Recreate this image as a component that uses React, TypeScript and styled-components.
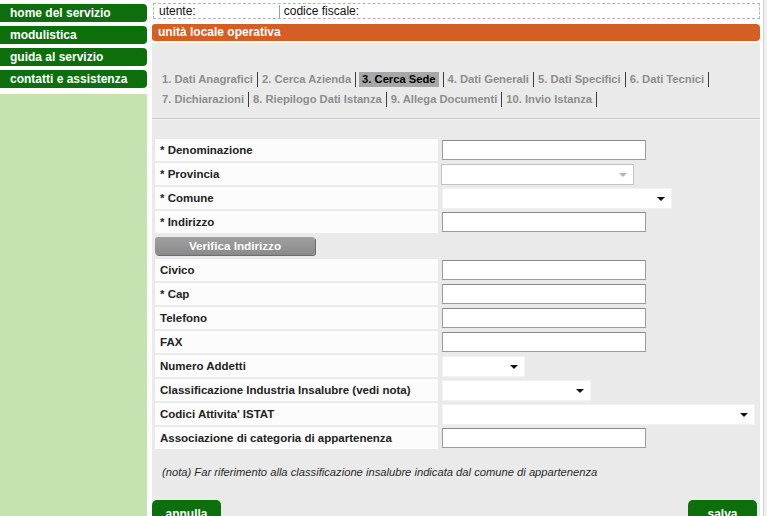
import { Fragment } from "react"
import styled, { createGlobalStyle } from "styled-components"

const GlobalStyle = createGlobalStyle`
  html, body {
    margin: 0;
    padding: 0;
    background: #fff;
    font-family: "Liberation Sans", Arial, sans-serif;
  }
`

type Field = {
  label: string
  kind: "text" | "select" | "disabled" | "button"
  width?: number
}

const menu = ["home del servizio", "modulistica", "guida al servizio", "contatti e assistenza"]

const stepLines = [
  ["1. Dati Anagrafici", "2. Cerca Azienda", "3. Cerca Sede", "4. Dati Generali", "5. Dati Specifici", "6. Dati Tecnici"],
  ["7. Dichiarazioni", "8. Riepilogo Dati Istanza", "9. Allega Documenti", "10. Invio Istanza"],
]

const fields: Field[] = [
  { label: "* Denominazione", kind: "text", width: 204 },
  { label: "* Provincia", kind: "disabled", width: 193 },
  { label: "* Comune", kind: "select", width: 230 },
  { label: "* Indirizzo", kind: "text", width: 204 },
  { label: "Verifica Indirizzo", kind: "button" },
  { label: "Civico", kind: "text", width: 204 },
  { label: "* Cap", kind: "text", width: 204 },
  { label: "Telefono", kind: "text", width: 204 },
  { label: "FAX", kind: "text", width: 204 },
  { label: "Numero Addetti", kind: "select", width: 83 },
  { label: "Classificazione Industria Insalubre (vedi nota)", kind: "select", width: 149 },
  { label: "Codici Attivita' ISTAT", kind: "select", width: 313 },
  { label: "Associazione di categoria di appartenenza", kind: "text", width: 204 },
]

export default function App() {
  return (
    <>
      <GlobalStyle />
      <Page>
        <Sidebar>
          {menu.map((m) => (
            <MenuItem key={m}>{m}</MenuItem>
          ))}
          <SideFill />
        </Sidebar>

        <Main>
          <UserBar>
            <span>utente:</span>
            <UserSep />
            <span>codice fiscale:</span>
          </UserBar>
          <TitleBar>unità locale operativa</TitleBar>

          <Panel>
            <Steps>
              {stepLines.map((line, i) => (
                <StepLine key={i}>
                  {line.map((s) => (
                    <Fragment key={s}>
                      <Step $active={s === "3. Cerca Sede"}>{s}</Step>
                      <StepSep />
                    </Fragment>
                  ))}
                </StepLine>
              ))}
            </Steps>
            <Divider />

            <Form>
              {fields.map((f) =>
                f.kind === "button" ? (
                  <Row key={f.label}>
                    <GrayButton>{f.label}</GrayButton>
                  </Row>
                ) : (
                  <Row key={f.label}>
                    <LabelCell>{f.label}</LabelCell>
                    {f.kind === "text" && <TextInput $width={f.width!} />}
                    {f.kind === "select" && <SelectBox $width={f.width!} />}
                    {f.kind === "disabled" && <SelectBox $width={f.width!} $disabled />}
                  </Row>
                )
              )}
            </Form>

            <Note>(nota) Far riferimento alla classificazione insalubre indicata dal comune di appartenenza</Note>

            <Actions>
              <GreenButton>annulla</GreenButton>
              <GreenButton>salva</GreenButton>
            </Actions>
          </Panel>
        </Main>
        <ScrollEdge />
      </Page>
    </>
  )
}

const Page = styled.div`
  display: flex;
  height: 516px;
  overflow: hidden;
`

const Sidebar = styled.nav`
  width: 147px;
  flex-shrink: 0;
  display: flex;
  flex-direction: column;
  gap: 4px;
  padding-top: 4px;
`

const MenuItem = styled.div`
  height: 18px;
  line-height: 18px;
  padding-left: 10px;
  background: #0c6f0c;
  border-radius: 0 4px 4px 0;
  color: #fff;
  font-size: 12px;
  font-weight: bold;
`

const SideFill = styled.div`
  flex: 1;
  margin-top: 2px;
  background: #c4e3b1;
`

const Main = styled.main`
  width: 608px;
  margin-left: 5px;
  flex-shrink: 0;
  display: flex;
  flex-direction: column;
`

const UserBar = styled.div`
  margin: 3px 0 0 1px;
  height: 14px;
  border: 1px dashed #b4b4b4;
  background: #fff;
  display: flex;
  align-items: center;
  padding-left: 5px;
  font-size: 12px;
  color: #111;
`

const UserSep = styled.span`
  width: 1px;
  height: 13px;
  background: #7fa6c8;
  margin: 0 4px 0 83px;
`

const TitleBar = styled.div`
  margin-top: 5px;
  height: 17px;
  line-height: 17px;
  padding-left: 6px;
  background: #d35f25;
  border-radius: 3px 4px 4px 3px;
  color: #fff;
  font-size: 12px;
  font-weight: bold;
`

const Panel = styled.section`
  flex: 1;
  margin-top: 2px;
  background: #e9eae9;
  display: flex;
  flex-direction: column;
`

const Steps = styled.div`
  padding: 26px 10px 9px;
`

const StepLine = styled.div`
  display: flex;
  align-items: center;
  height: 20px;
`

const Step = styled.span<{ $active?: boolean }>`
  font-size: 11.2px;
  font-weight: bold;
  line-height: 15px;
  color: ${(p) => (p.$active ? "#000" : "#8d8d8d")};
  background: ${(p) => (p.$active ? "#a7a7a7" : "transparent")};
  padding: ${(p) => (p.$active ? "0 3px" : "0")};
  margin-left: ${(p) => (p.$active ? "-1px" : "0")};
`

const StepSep = styled.span`
  width: 1px;
  height: 15px;
  background: #3c3c3c;
  margin: 0 4px;
`

const Divider = styled.div`
  height: 1px;
  background: #c6c6c6;
  border-bottom: 1px solid #f4f4f4;
`

const Form = styled.div`
  margin-top: 19px;
  padding-left: 3px;
  display: flex;
  flex-direction: column;
  gap: 2px;
`

const Row = styled.div`
  height: 22px;
  display: grid;
  grid-template-columns: 283px 1fr;
  column-gap: 4px;
  align-items: center;
`

const LabelCell = styled.div`
  height: 22px;
  line-height: 22px;
  padding-left: 5px;
  background: #fcfcfc;
  font-size: 11.5px;
  font-weight: bold;
  color: #222;
  white-space: nowrap;
`

const TextInput = styled.div<{ $width: number }>`
  width: ${(p) => p.$width}px;
  height: 20px;
  box-sizing: border-box;
  background: #fff;
  border: 1px solid #9c9c9c;
  border-top-color: #8a8a8a;
`

const SelectBox = styled.div<{ $width: number; $disabled?: boolean }>`
  position: relative;
  width: ${(p) => p.$width}px;
  height: 21px;
  box-sizing: border-box;
  background: #fff;
  border: 1px solid ${(p) => (p.$disabled ? "#c4c4c4" : "#f2f2f2")};
  margin-left: ${(p) => (p.$disabled ? "-1px" : "0")};

  &::after {
    content: "";
    position: absolute;
    right: 6px;
    top: 8px;
    border-left: 4px solid transparent;
    border-right: 4px solid transparent;
    border-top: 4px solid ${(p) => (p.$disabled ? "#b4b4b4" : "#111")};
  }
`

const GrayButton = styled.div`
  width: 160px;
  height: 18px;
  line-height: 18px;
  box-sizing: border-box;
  background: linear-gradient(#a0a0a0, #8a8a8a);
  border-radius: 3px;
  box-shadow: 1px 1px 0 #6c6c6c;
  text-align: center;
  color: #fff;
  font-size: 11.7px;
  font-weight: bold;
`

const Note = styled.p`
  margin: 16px 0 0 10px;
  font-size: 11.2px;
  line-height: 14px;
  font-style: italic;
  color: #2a2a2a;
`

const Actions = styled.div`
  margin-top: 21px;
  padding-right: 3px;
  display: flex;
  justify-content: space-between;
`

const GreenButton = styled.div`
  width: 69px;
  height: 30px;
  padding-top: 7px;
  box-sizing: border-box;
  background: #0c6f0c;
  border-radius: 5px 5px 0 0;
  text-align: center;
  color: #fff;
  font-size: 12px;
  font-weight: bold;
`

const ScrollEdge = styled.div`
  width: 3px;
  margin-left: 3px;
  border-left: 1px solid #d2d2d2;
  background: #efefef;
`
